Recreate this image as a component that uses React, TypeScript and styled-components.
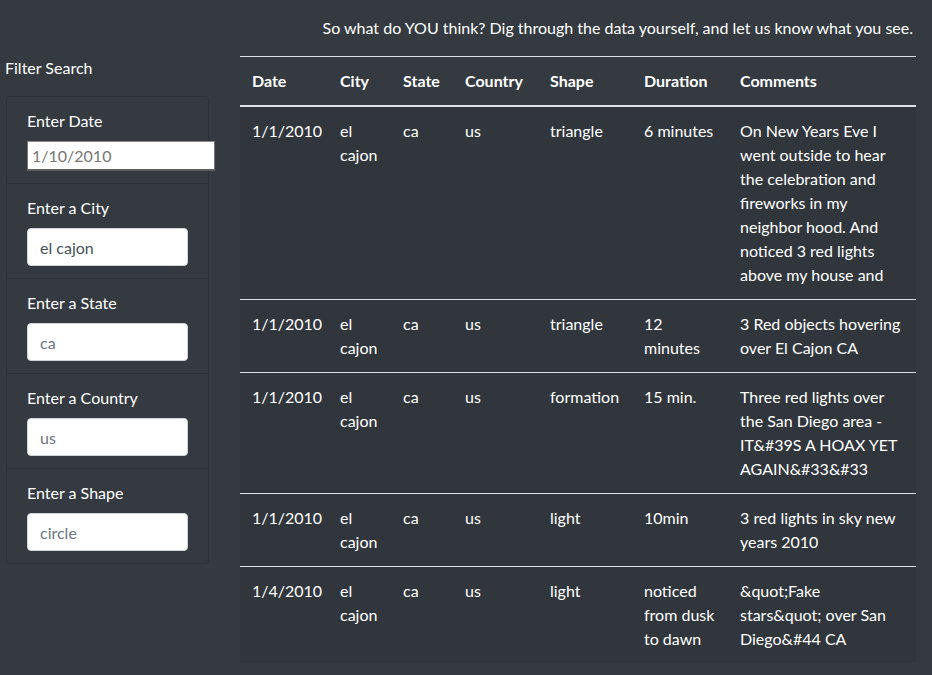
import React from "react";
import styled, { createGlobalStyle } from "styled-components";

const Global = createGlobalStyle`
  html, body {
    margin: 0;
    padding: 0;
    background: #343a40;
    color: #ffffff;
    font-family: "Lato", "Open Sans", sans-serif;
    font-size: 16px;
    line-height: 1.5;
  }
  * { box-sizing: border-box; }
`;

const Page = styled.div`
  display: grid;
  grid-template-columns: 203px 676px;
  column-gap: 31px;
  padding: 0 16px 13px 6px;
  min-height: 675px;
`;

const Sidebar = styled.aside`
  padding-top: 56px;
`;

const SideTitle = styled.div`
  margin: 0 0 16px -1px;
  line-height: 24px;
`;

const Card = styled.div`
  border: 1px solid rgba(0, 0, 0, 0.125);
  border-radius: 4px;
  background: #343a40;
`;

const Item = styled.div`
  padding: 12px 20px;
  border-bottom: 1px solid rgba(0, 0, 0, 0.125);
  &:last-child {
    border-bottom: none;
  }
`;

const Label = styled.label`
  display: block;
  margin-bottom: 8px;
  line-height: 24px;
`;

const FormControl = styled.input`
  display: block;
  width: 100%;
  height: 38px;
  padding: 6px 12px;
  font-family: inherit;
  font-size: 16px;
  line-height: 24px;
  color: #495057;
  background: #ffffff;
  border: 1px solid #ced4da;
  border-radius: 4px;
  outline: none;
  &::placeholder {
    color: #6c757d;
  }
`;

const PlainInput = styled.input`
  display: block;
  width: 188px;
  height: 30px;
  padding: 1px 4px;
  font-family: inherit;
  font-size: 16px;
  color: #495057;
  background: #ffffff;
  border-style: solid;
  border-width: 1px 1px 2px 1px;
  border-color: #8a8a8a #767676 #5e5e5e #767676;
  border-radius: 0;
  outline: none;
  &::placeholder {
    color: #767676;
  }
`;

const Main = styled.main`
  display: flex;
  flex-direction: column;
`;

const Intro = styled.p`
  margin: 16px 0;
  padding-right: 3px;
  text-align: right;
  line-height: 24px;
`;

const Table = styled.table`
  width: 676px;
  border-collapse: collapse;
  table-layout: fixed;
`;

const Th = styled.th`
  padding: 12px;
  text-align: left;
  font-weight: 700;
  line-height: 24px;
  border-top: 1px solid #dee2e6;
  border-bottom: 2px solid #dee2e6;
`;

const Body = styled.tbody`
  background: #31363c;
`;

const Td = styled.td`
  padding: 12px;
  vertical-align: top;
  line-height: 24px;
  border-top: 1px solid #dee2e6;
  white-space: normal;
`;

const widths = [88, 63, 62, 85, 94, 96, 188];
const headers = ["Date", "City", "State", "Country", "Shape", "Duration", "Comments"];

const rows = [
  ["1/1/2010", "el cajon", "ca", "us", "triangle", "6 minutes",
    "On New Years Eve I went outside to hear the celebration and fireworks in my neighbor hood. And noticed 3 red lights above my house and"],
  ["1/1/2010", "el cajon", "ca", "us", "triangle", "12 minutes", "3 Red objects hovering over El Cajon CA"],
  ["1/1/2010", "el cajon", "ca", "us", "formation", "15 min.", "Three red lights over the San Diego area - IT&#39S A HOAX YET AGAIN&#33&#33"],
  ["1/1/2010", "el cajon", "ca", "us", "light", "10min", "3 red lights in sky new years 2010"],
  ["1/4/2010", "el cajon", "ca", "us", "light", "noticed from dusk to dawn", "&quot;Fake stars&quot; over San Diego&#44 CA"],
];

export default function App() {
  return (
    <>
      <Global />
      <Page>
        <Sidebar>
          <SideTitle>Filter Search</SideTitle>
          <Card>
            <Item>
              <Label htmlFor="date">Enter Date</Label>
              <PlainInput id="date" type="text" placeholder="1/10/2010" />
            </Item>
            <Item>
              <Label htmlFor="city">Enter a City</Label>
              <FormControl id="city" type="text" defaultValue="el cajon" />
            </Item>
            <Item>
              <Label htmlFor="state">Enter a State</Label>
              <FormControl id="state" type="text" placeholder="ca" />
            </Item>
            <Item>
              <Label htmlFor="country">Enter a Country</Label>
              <FormControl id="country" type="text" placeholder="us" />
            </Item>
            <Item>
              <Label htmlFor="shape">Enter a Shape</Label>
              <FormControl id="shape" type="text" placeholder="circle" />
            </Item>
          </Card>
        </Sidebar>
        <Main>
          <Intro>So what do YOU think? Dig through the data yourself, and let us know what you see.</Intro>
          <Table>
            <colgroup>
              {widths.map((w, i) => (
                <col key={i} style={{ width: w }} />
              ))}
            </colgroup>
            <thead>
              <tr>
                {headers.map((h) => (
                  <Th key={h}>{h}</Th>
                ))}
              </tr>
            </thead>
            <Body>
              {rows.map((r, i) => (
                <tr key={i}>
                  {r.map((c, j) => (
                    <Td key={j}>{c}</Td>
                  ))}
                </tr>
              ))}
            </Body>
          </Table>
        </Main>
      </Page>
    </>
  );
}
